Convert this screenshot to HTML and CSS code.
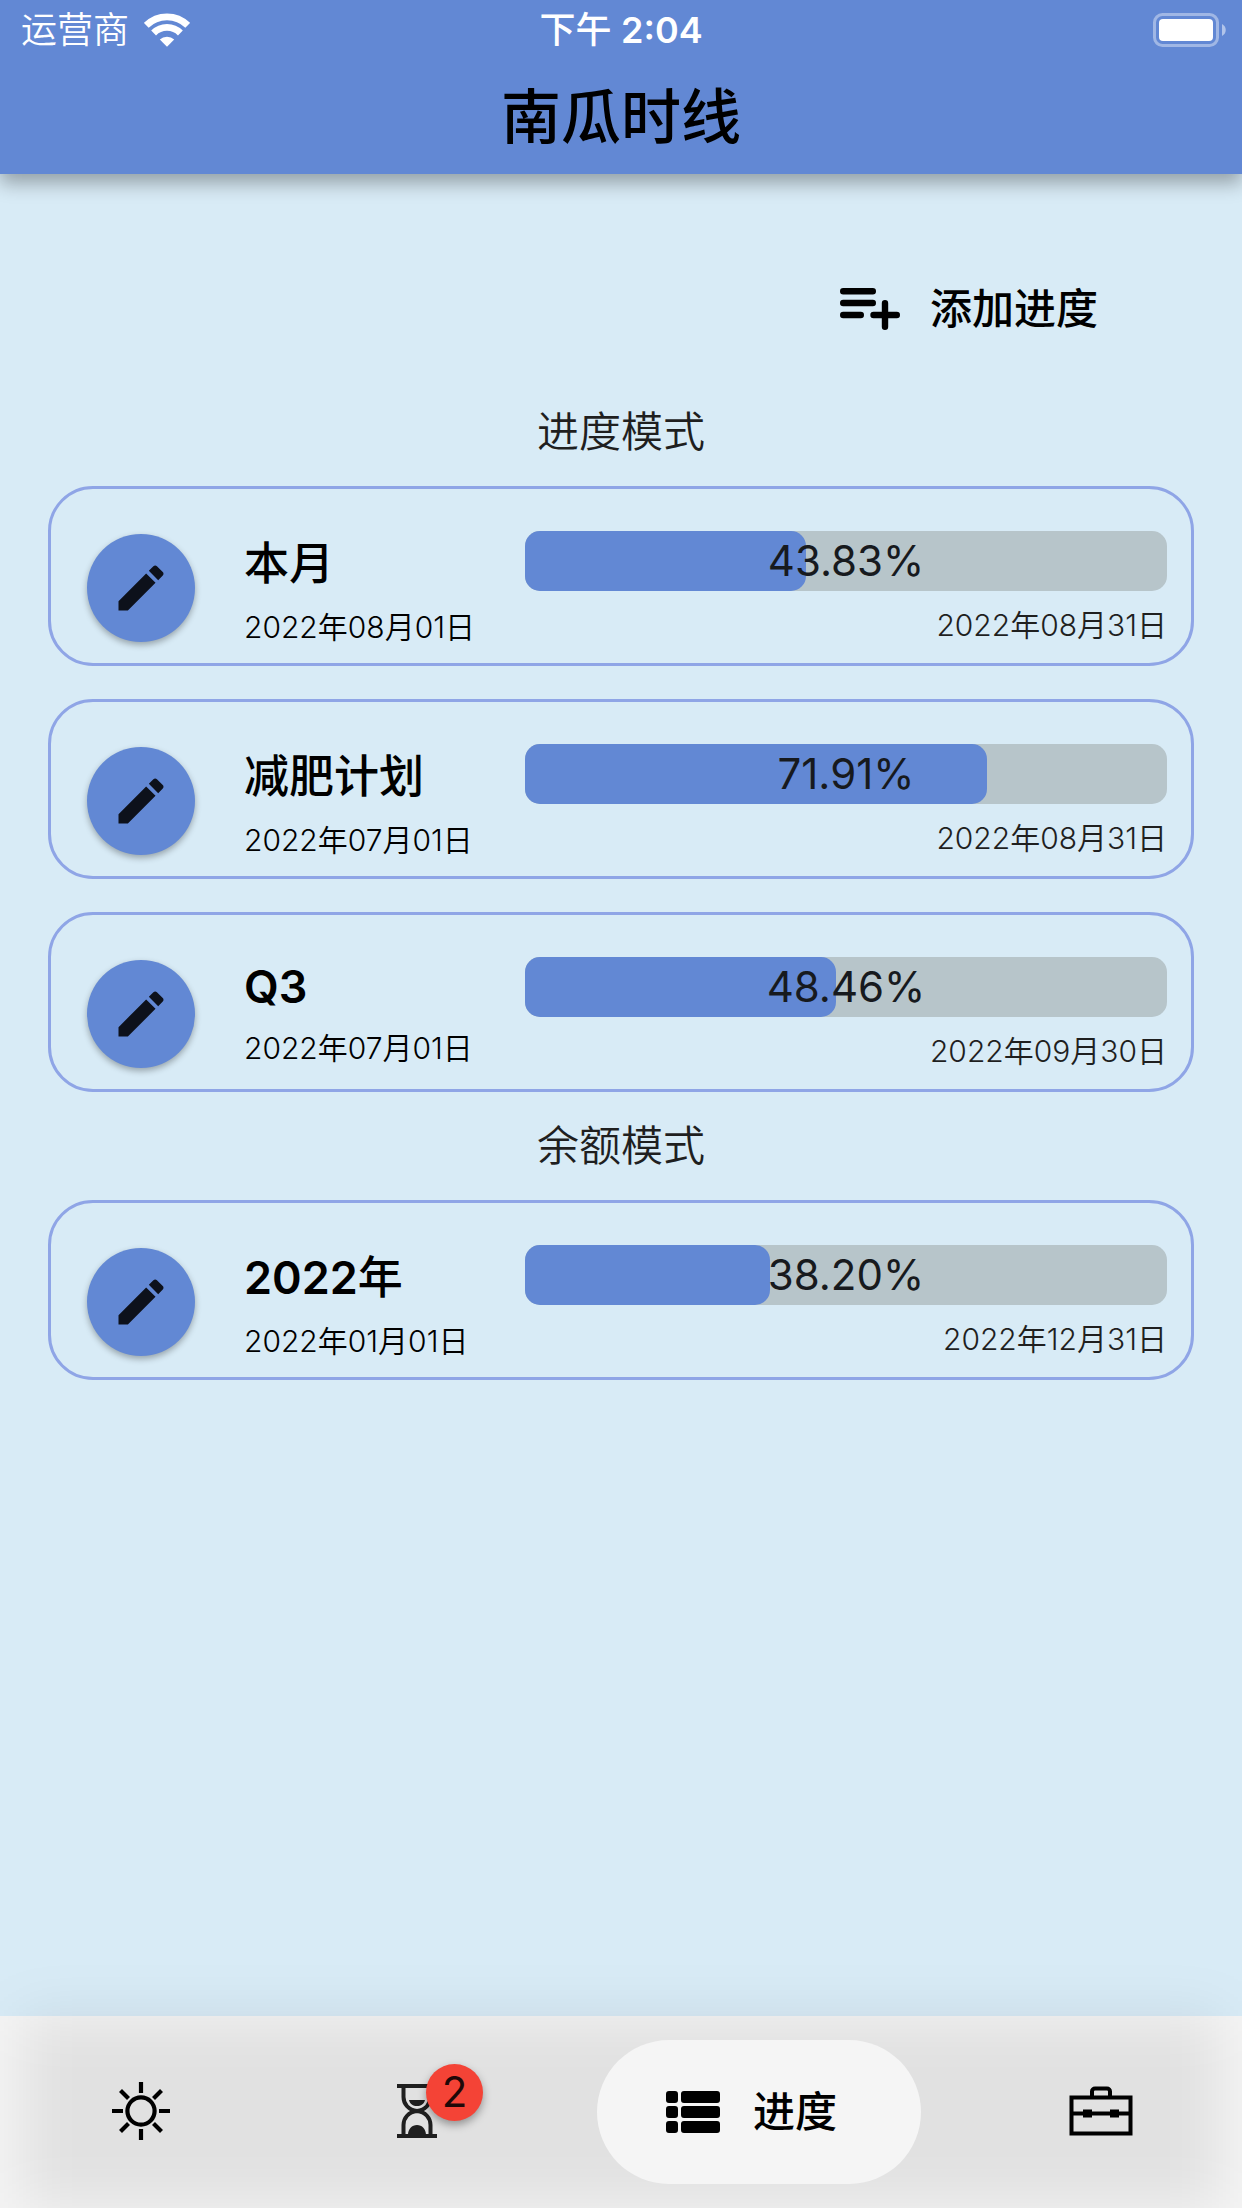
FILE: index.html
```html
<!DOCTYPE html>
<html lang="zh-CN">
<head>
<meta charset="utf-8">
<meta name="viewport" content="width=device-width, initial-scale=1">
<title>南瓜时线</title>
<link rel="stylesheet" href="styles.css">
</head>
<body>
<svg class="sprite" aria-hidden="true">
  <symbol id="pencil" viewBox="0 0 24 24"><path d="M3 17.25V21h3.75L17.81 9.94l-3.75-3.75L3 17.25zM20.71 7.04c.39-.39.39-1.02 0-1.41l-2.34-2.34c-.39-.39-1.02-.39-1.41 0l-1.83 1.83 3.75 3.75 1.83-1.83z"/></symbol>
</svg>

<header class="app-bar">
  <div class="status">
    <div class="carrier">
      <span>运营商</span>
      <svg width="46" height="34" viewBox="0 0 46 34" fill="none" stroke="#fff" stroke-width="6.8">
        <path d="M2.3 12.3a29.5 29.5 0 0 1 41.4 0"/>
        <path d="M9.6 20a18.8 18.8 0 0 1 26.8 0"/>
        <path d="M15.8 26.6a10.3 10.3 0 0 1 14.4 0L23 33.8z" fill="#fff" stroke="none"/>
      </svg>
    </div>
    <span class="clock">下午 <b>2:04</b></span>
    <svg class="battery" width="74" height="34" viewBox="0 0 74 34">
      <rect x="1.5" y="1.5" width="63" height="31" rx="8" fill="none" stroke="#fff" stroke-opacity=".4" stroke-width="3"/>
      <rect x="6" y="6" width="54" height="22" rx="4" fill="#fff"/>
      <path d="M69 11c5 2.500 5 9.500 0 12z" fill="#fff" fill-opacity=".5"/>
    </svg>
  </div>
  <h1 class="title">南瓜时线</h1>
</header>

<main class="content">
  <div class="actions">
    <button class="add" type="button">
      <svg width="60" height="42" viewBox="0 0 60 42" fill="none" stroke="#000" stroke-width="6.400" stroke-linecap="round">
        <path d="M3.200 3.200h29.600M3.200 15h29.600M3.200 27h17.600M33.500 27h23.300M45 15.200v23.600"/>
      </svg>
      <span>添加进度</span>
    </button>
  </div>

  <section>
    <h2 class="mode">进度模式</h2>
    <ul class="list">
      <li class="card">
        <button class="edit" type="button" aria-label="编辑"><svg width="60" height="60"><use href="#pencil"/></svg></button>
        <div class="info"><h3 class="name">本月</h3><time class="date">2022年08月01日</time></div>
        <div class="progress">
          <div class="bar"><div class="fill" style="width:43.83%"></div><span class="percent">43.83%</span></div>
          <time class="date date-end">2022年08月31日</time>
        </div>
      </li>
      <li class="card">
        <button class="edit" type="button" aria-label="编辑"><svg width="60" height="60"><use href="#pencil"/></svg></button>
        <div class="info"><h3 class="name">减肥计划</h3><time class="date">2022年07月01日</time></div>
        <div class="progress">
          <div class="bar"><div class="fill" style="width:71.91%"></div><span class="percent">71.91%</span></div>
          <time class="date date-end">2022年08月31日</time>
        </div>
      </li>
      <li class="card">
        <button class="edit" type="button" aria-label="编辑"><svg width="60" height="60"><use href="#pencil"/></svg></button>
        <div class="info"><h3 class="name"><b>Q3</b></h3><time class="date">2022年07月01日</time></div>
        <div class="progress">
          <div class="bar"><div class="fill" style="width:48.46%"></div><span class="percent">48.46%</span></div>
          <time class="date date-end">2022年09月30日</time>
        </div>
      </li>
    </ul>
  </section>

  <section>
    <h2 class="mode">余额模式</h2>
    <ul class="list">
      <li class="card">
        <button class="edit" type="button" aria-label="编辑"><svg width="60" height="60"><use href="#pencil"/></svg></button>
        <div class="info"><h3 class="name"><b>2022</b>年</h3><time class="date">2022年01月01日</time></div>
        <div class="progress">
          <div class="bar"><div class="fill" style="width:38.2%"></div><span class="percent">38.20%</span></div>
          <time class="date date-end">2022年12月31日</time>
        </div>
      </li>
    </ul>
  </section>
</main>

<nav class="nav">
  <button class="tab" type="button" aria-label="今日">
    <svg width="60" height="60" viewBox="0 0 60 60" fill="none" stroke="#000" stroke-width="4.200">
      <circle cx="30" cy="29" r="13.600"/>
      <path d="M30 0v11M30 47v11M1 29h11M48 29h11M9.500 8.500l8 8M42.500 41.500l8 8M9.500 49.500l8-8M42.500 16.500l8-8"/>
    </svg>
  </button>
  <button class="tab tab-timer" type="button" aria-label="倒计时">
    <svg width="60" height="60" viewBox="0 0 60 60" fill="none" stroke="#1f1f1f" stroke-width="4">
      <path d="M10 4h40M10 54h40M16.500 4v11c0 7 5 13 13.500 14 8.500-1 13.500-7 13.500-14V4M16.500 54V43c0-7 5-13 13.500-14 8.500 1 13.500 7 13.500 14v11"/>
      <path d="M22 18h16c-1 4-4 6-8 6s-7-2-8-6zM21 53c0-6 4-10 9-10s9 4 9 10z" fill="#1f1f1f" stroke="none"/>
    </svg>
    <span class="badge">2</span>
  </button>
  <button class="tab tab-active" type="button" aria-current="page">
    <svg width="54" height="42" viewBox="0 0 54 42">
      <path d="M3 0h6a3 3 0 0 1 3 3v6a3 3 0 0 1-3 3H3a3 3 0 0 1-3-3V3a3 3 0 0 1 3-3zM18 0h33a3 3 0 0 1 3 3v6a3 3 0 0 1-3 3H18a3 3 0 0 1-3-3V3a3 3 0 0 1 3-3zM3 15h6a3 3 0 0 1 3 3v6a3 3 0 0 1-3 3H3a3 3 0 0 1-3-3v-6a3 3 0 0 1 3-3zM18 15h33a3 3 0 0 1 3 3v6a3 3 0 0 1-3 3H18a3 3 0 0 1-3-3v-6a3 3 0 0 1 3-3zM3 30h6a3 3 0 0 1 3 3v6a3 3 0 0 1-3 3H3a3 3 0 0 1-3-3v-6a3 3 0 0 1 3-3zM18 30h33a3 3 0 0 1 3 3v6a3 3 0 0 1-3 3H18a3 3 0 0 1-3-3v-6a3 3 0 0 1 3-3z"/>
    </svg>
    <span>进度</span>
  </button>
  <button class="tab" type="button" aria-label="工具箱">
    <svg width="64" height="52" viewBox="0 0 64 52" fill="none" stroke="#000" stroke-width="4">
      <path d="M2.500 11.500h59v36h-59zM2 27.500h60M23 11V5.500A3 3 0 0 1 26 2.500h12a3 3 0 0 1 3 3V11"/>
      <path d="M14 23.500h9v8h-9zM41 23.500h9v8h-9z" fill="#000" stroke="none"/>
    </svg>
  </button>
</nav>
</body>
</html>
```
FILE: styles.css
```css
* {
  box-sizing: border-box;
}

body {
  margin: 0;
  min-height: 100vh;
  display: flex;
  flex-direction: column;
  background: #d8ebf6;
  color: #000;
  font-family: Inter, "Noto Sans CJK SC", sans-serif;
  font-size: 42px;
}

h1, h2, h3, ul {
  margin: 0;
  padding: 0;
  font-weight: 400;
}

b {
  font-weight: 600;
}

button {
  border: 0;
  padding: 0;
  background: none;
  color: inherit;
  font: inherit;
  cursor: pointer;
}

svg {
  display: block;
  flex: none;
}

.sprite {
  position: absolute;
  width: 0;
  height: 0;
}

/* App bar */
.app-bar {
  background: #6288d4;
  box-shadow: 0 9px 18px rgba(0, 0, 0, .32);
}

.status {
  display: grid;
  grid-template-columns: 1fr auto 1fr;
  align-items: center;
  height: 60px;
  padding: 0 15px;
  color: #fff;
  font-size: 36px;
  line-height: 60px;
}

.carrier {
  display: flex;
  align-items: center;
  gap: 15px;
  padding-left: 6px;
  font-weight: 350;
}

.clock {
  font-weight: 500;
}

.battery {
  justify-self: end;
}

.title {
  height: 114px;
  font-size: 60px;
  font-weight: 500;
  line-height: 114px;
  text-align: center;
}

/* Content */
.content {
  flex: 1;
  padding: 81px 48px 0;
}

.actions {
  display: flex;
  justify-content: flex-end;
  padding: 0 96px 0 0;
}

.add {
  display: flex;
  align-items: center;
  gap: 30px;
  height: 108px;
  font-weight: 500;
  line-height: 60px;
}

.mode {
  color: #1f1f1f;
  font-size: 42px;
  font-weight: 350;
  line-height: 108px;
  text-align: center;
}

.actions + section {
  padding-top: 15px;
}

.list {
  display: grid;
  gap: 33px;
  list-style: none;
}

.card {
  display: grid;
  grid-template-columns: 108px minmax(0, 232px) minmax(0, 1fr);
  column-gap: 49px;
  height: 180px;
  padding: 24px 24px 0 36px;
  border: 3px solid #8fa5e6;
  border-radius: 45px;
}

.edit {
  display: grid;
  place-items: center;
  align-self: center;
  width: 108px;
  height: 108px;
  border-radius: 50%;
  background: #6288d4;
  box-shadow: 0 3px 6px rgba(0, 0, 0, .3);
  fill: #0d111b;
}

.info {
  display: flex;
  flex-direction: column;
  justify-content: center;
  gap: 10px;
  padding-bottom: 2px;
  white-space: nowrap;
}

.name {
  font-size: 45px;
  font-weight: 500;
}

.date {
  font-size: 30px;
  font-weight: 350;
}

.progress {
  display: flex;
  flex-direction: column;
  padding-top: 18px;
}

.bar {
  position: relative;
  height: 60px;
  border-radius: 15px;
  background: #b7c5ca;
}

.fill {
  height: 100%;
  border-radius: 15px;
  background: #6288d4;
}

.percent {
  position: absolute;
  inset: 0;
  color: #171a1e;
  line-height: 60px;
  text-align: center;
}

.date-end {
  padding-top: 10px;
  color: #1f1f1f;
  text-align: right;
}

/* Bottom navigation */
.nav {
  position: relative;
  display: flex;
  align-items: center;
  justify-content: space-between;
  height: 192px;
  padding: 0 69px;
  background: #f5f5f5;
}

.nav::before {
  content: "";
  position: absolute;
  inset: 0 21px;
  background: rgba(0, 0, 0, .08);
  filter: blur(28px);
  pointer-events: none;
}

.tab {
  position: relative;
  display: flex;
  align-items: center;
  justify-content: center;
  width: 144px;
  height: 144px;
  line-height: 60px;
}

.tab-timer {
  justify-content: flex-start;
  width: 168px;
  padding-left: 66px;
}

.badge {
  position: absolute;
  top: 24px;
  left: 105px;
  width: 57px;
  height: 57px;
  border-radius: 50%;
  background: #f44336;
  box-shadow: 0 4px 8px rgba(0, 0, 0, .35);
  color: #1f0808;
  line-height: 56px;
  text-align: center;
}

.tab-active {
  gap: 33px;
  width: 324px;
  padding-right: 15px;
  border-radius: 72px;
  background: #f5f5f5;
  font-weight: 500;
}
```
